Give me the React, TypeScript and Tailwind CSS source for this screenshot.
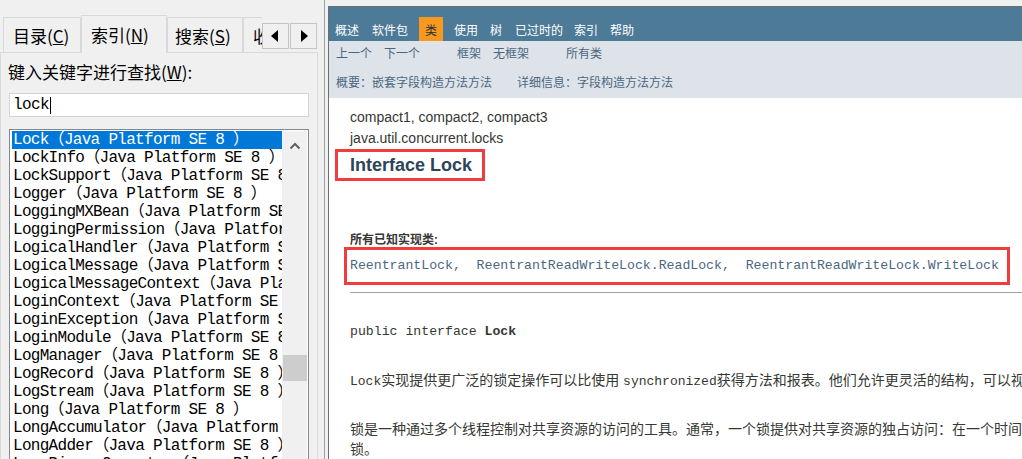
import React from "react";

const names = [
  "Lock",
  "LockInfo",
  "LockSupport",
  "Logger",
  "LoggingMXBean",
  "LoggingPermission",
  "LogicalHandler",
  "LogicalMessage",
  "LogicalMessageContext",
  "LoginContext",
  "LoginException",
  "LoginModule",
  "LogManager",
  "LogRecord",
  "LogStream",
  "Long",
  "LongAccumulator",
  "LongAdder",
  "LongBinaryOperator",
];

function LeftPane() {
  return (
    <div className="flex w-[324px] shrink-0 flex-col font-['Noto_Sans_CJK_SC',sans-serif] text-[17px] text-black">
      {/* tab strip */}
      <div className="relative z-10 mt-[15px] flex h-[38px] items-start pl-[3px]">
        <div className="flex h-[38px] w-[259px] shrink-0 items-end overflow-hidden">
          <div className="flex h-[36px] w-[78px] shrink-0 items-center border border-b-0 border-[#d9d9d9] pl-[9px] pt-[1px] leading-[20px]">
            目录(<u>C</u>)
          </div>
          <div className="flex h-[38px] w-[86px] shrink-0 items-center border border-b-0 border-[#d9d9d9] bg-[#f0f0f0] pl-[9px] leading-[20px]">
            索引(<u>N</u>)
          </div>
          <div className="flex h-[36px] w-[76px] shrink-0 items-center border border-b-0 border-[#d9d9d9] pl-[7px] pt-[1px] leading-[20px]">
            搜索(<u>S</u>)
          </div>
          <div className="flex h-[36px] w-[80px] shrink-0 items-center border border-b-0 border-[#d9d9d9] pl-[9px] pt-[1px] leading-[20px] whitespace-nowrap">
            收藏夹(<u>I</u>)
          </div>
        </div>
        <div className="mt-[8px] flex h-[26px] w-[27px] shrink-0 items-center justify-center border border-[#c4c4c4] bg-[#f0f0f0]">
          <svg width="25" height="24" viewBox="0 0 25 24">
            <polygon points="15,6 15,18 8,12" fill="#000" />
          </svg>
        </div>
        <div className="ml-[1px] mt-[8px] flex h-[26px] w-[27px] shrink-0 items-center justify-center border border-[#c4c4c4] bg-[#f0f0f0]">
          <svg width="25" height="24" viewBox="0 0 25 24">
            <polygon points="10,6 10,18 17,12" fill="#000" />
          </svg>
        </div>
      </div>

      {/* tab body */}
      <div className="-mt-px flex w-[318px] flex-1 flex-col border border-b-0 border-[#d9d9d9] pl-[7px] pt-[9px]">
        <div className="leading-[20px] whitespace-nowrap">
          键入关键字进行查找(<u>W</u>):
        </div>
        <div className="ml-[1px] mt-[11px] flex h-[24px] w-[300px] items-center border border-[#d4d4d4] bg-white pl-[3px] font-['Liberation_Mono',monospace] text-[16px] tracking-[-0.6px]">
          <span>lock</span>
          <span className="ml-[1px] h-[17px] w-px bg-black" />
        </div>
        <div className="ml-[1px] mt-[12px] flex w-[300px] flex-1 overflow-hidden border border-b-0 border-[#828790] bg-white pl-[2px] pr-[1px] pt-px">
          <div className="w-[270px] shrink-0 overflow-hidden font-['Liberation_Mono','Noto_Sans_CJK_SC',monospace] text-[16px] tracking-[-0.7px]">
            {names.map((n, i) => (
              <div
                key={n}
                className={
                  i === 0
                    ? "h-[18px] whitespace-nowrap bg-[#0078d7] pl-[1px] leading-[18px] text-white"
                    : "h-[18px] whitespace-nowrap pl-[1px] leading-[18px] text-black"
                }
              >
                {n}（Java Platform SE 8 ）
              </div>
            ))}
          </div>
          <div className="flex w-[25px] shrink-0 flex-col items-center bg-[#f0f0f0]">
            <svg className="mt-[10px]" width="12" height="9" viewBox="0 0 12 9">
              <path d="M1.5 7.5 L6 3 L10.5 7.5" stroke="#606060" strokeWidth="2" fill="none" />
            </svg>
            <div className="mt-[205px] h-[26px] w-[24px] bg-[#cdcdcd]" />
          </div>
        </div>
      </div>
    </div>
  );
}

function RightPane() {
  return (
    <div className="flex min-w-0 flex-1 flex-col pt-[6px]">
      <div className="flex flex-1 flex-col overflow-hidden border-l border-t border-[#6e6e6e] bg-white font-['Liberation_Sans','Noto_Sans_CJK_SC',sans-serif]">
        <div className="flex h-[34px] shrink-0 items-start bg-[#4d7a97] pl-[6px] pt-[10px] text-[12px] text-white">
          <span className="flex h-[24px] items-center pt-[4px] leading-[12px]">概述</span>
          <span className="ml-[13px] flex h-[24px] items-center pt-[4px] leading-[12px]">软件包</span>
          <span className="ml-[11px] flex h-[24px] items-center bg-[#f8981d] px-[6px] pt-[4px] leading-[12px] text-[#253441]">类</span>
          <span className="ml-[11px] flex h-[24px] items-center pt-[4px] leading-[12px]">使用</span>
          <span className="ml-[12px] flex h-[24px] items-center pt-[4px] leading-[12px]">树</span>
          <span className="ml-[13px] flex h-[24px] items-center pt-[4px] leading-[12px]">已过时的</span>
          <span className="ml-[11px] flex h-[24px] items-center pt-[4px] leading-[12px]">索引</span>
          <span className="ml-[12px] flex h-[24px] items-center pt-[4px] leading-[12px]">帮助</span>
        </div>
        <div className="h-[57px] shrink-0 bg-[#dee3e9] pl-[7px] pt-[5px] text-[12px] leading-[16px] text-[#4a6782] whitespace-nowrap">
          <div className="flex">
            <span>上一个</span>
            <span className="ml-[12px]">下一个</span>
            <span className="ml-[37px]">框架</span>
            <span className="ml-[12px]">无框架</span>
            <span className="ml-[37px]">所有类</span>
          </div>
          <div className="mt-[13px] flex">
            <span>概要：嵌套字段构造方法方法</span>
            <span className="ml-[25px]">详细信息：字段构造方法方法</span>
          </div>
        </div>
        <div className="flex-1 pl-[21px] pt-[9px] text-[14px] leading-[21px] text-[#353833]">
          <div>compact1, compact2, compact3</div>
          <div>java.util.concurrent.locks</div>
          <div className="-ml-[15px] flex h-[32px] w-[150px] items-center border-[3px] border-[#f03c3c] pl-[12px] text-[18px] font-bold leading-[22px] text-[#2c4557]">
            Interface Lock
          </div>
          <div className="mt-[51px] text-[12px] font-bold leading-[16px]">所有已知实现类:</div>
          <div className="-ml-[6px] -mt-px flex h-[38px] w-[666px] items-center whitespace-pre border-[3px] border-[#f03c3c] pl-[3px] font-['Liberation_Mono',monospace] text-[13.2px] leading-[16px] text-[#4a6782]">
            {"ReentrantLock,  ReentrantReadWriteLock.ReadLock,  ReentrantReadWriteLock.WriteLock"}
          </div>
          <div className="mt-[7px] w-[900px] border-t border-[#a0a0a0]" />
          <div className="mt-[31px] font-['Liberation_Mono',monospace] text-[13.2px] leading-[16px] whitespace-pre">
            public interface <span className="font-bold">Lock</span>
          </div>
          <div className="mt-[30px] whitespace-nowrap leading-[20px]">
            <span className="font-['Liberation_Mono',monospace] text-[13px]">Lock</span>
            实现提供更广泛的锁定操作可以比使用 <span className="font-['Liberation_Mono',monospace] text-[13px]">synchronized</span>
            获得方法和报表。他们允许更灵活的结构，可以视为完全不同的属性，并且可以支持多个相关的对象。
          </div>
          <div className="mt-[27px] whitespace-nowrap leading-[20px]">
            锁是一种通过多个线程控制对共享资源的访问的工具。通常，一个锁提供对共享资源的独占访问：在一个时间只有一个线程可以获取锁，并且对共享资源的所有访问都要求首先获取
            <br />
            锁。
          </div>
        </div>
      </div>
    </div>
  );
}

export default function App() {
  return (
    <div className="flex h-[459px] w-[1022px] overflow-hidden bg-[#f0f0f0]">
      <LeftPane />
      <div className="w-px shrink-0 bg-[#a0a0a0]" />
      <div className="w-[3px] shrink-0" />
      <RightPane />
    </div>
  );
}
